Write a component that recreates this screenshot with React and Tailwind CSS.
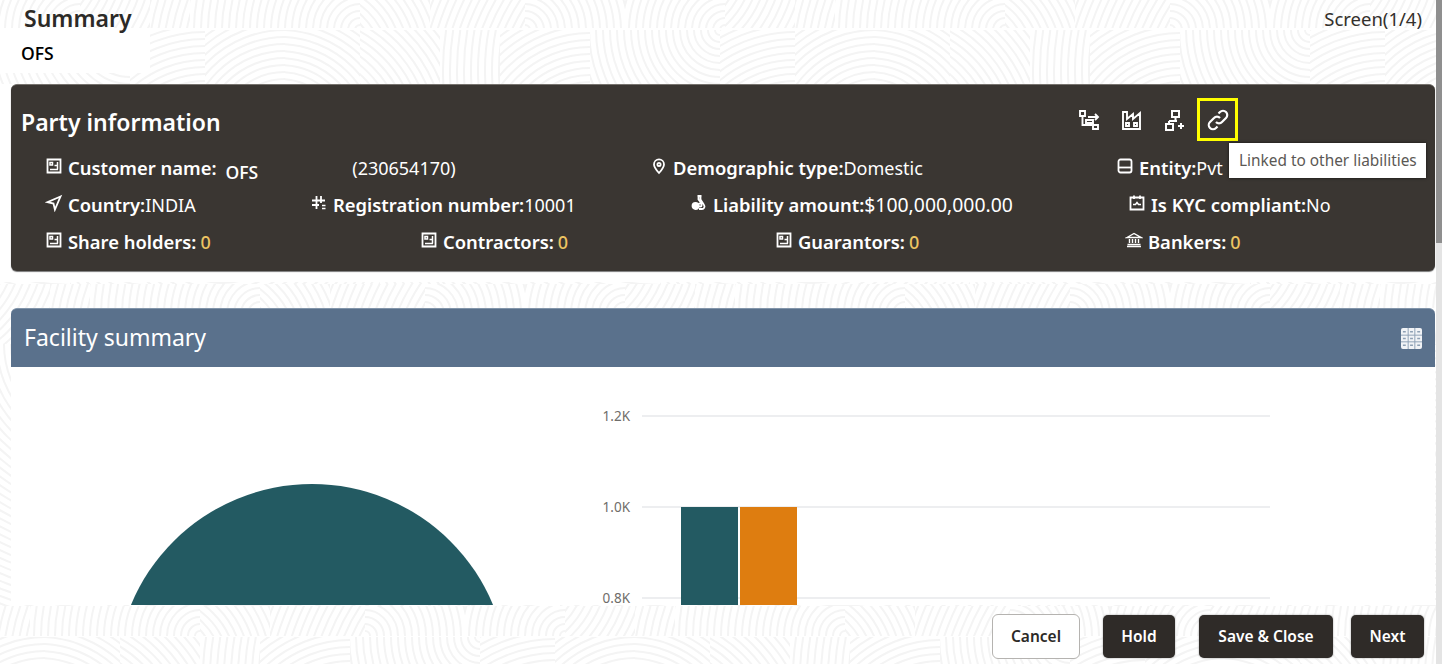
import React from "react";

const rings = (cx, cy) => {
  const out = [];
  for (let r = 5; r < 330; r += 7) out.push(<circle key={r} cx={cx} cy={cy} r={r} />);
  return out;
};

// each tile: width, centre x and y relative to the tile
const rowA = [[100,100,30],[70,-60,-40],[40,200,60],[170,170,30],[70,-40,60],[95,240,100],[100,0,30]];
const rowB = [[130,130,0],[75,75,140],[80,80,110],[75,-5,110],[80,-60,110],[60,260,40],[90,90,120]];
const Band = ({ y, h, tiles, shift = 0 }) => {
  const cells = [];
  let x = -shift, i = 0;
  while (x < 1442) {
    const [w, cx, cy] = tiles[i % tiles.length];
    cells.push(
      <svg key={i} x={x} y={y} width={w} height={h}>
        {rings(cx, cy)}
      </svg>
    );
    x += w;
    i++;
  }
  return <g>{cells}</g>;
};

const Pattern = () => (
  <svg className="absolute inset-0 w-[1442px] h-[664px]" viewBox="0 0 1442 664" fill="none" stroke="#f4f4f4" strokeWidth="2">
    <Band y={0} h={28} tiles={rowA} shift={20} />
    <Band y={30} h={54} tiles={rowB} />
    <Band y={84} h={200} tiles={rowB} shift={60} />
    <Band y={284} h={60} tiles={rowA} shift={120} />
    <Band y={344} h={262} tiles={rowB} shift={30} />
    <Band y={606} h={30} tiles={rowA} shift={180} />
    <Band y={637} h={27} tiles={rowB} shift={240} />
  </svg>
);

const Ic = ({ children, s = 18, className = "" }) => (
  <svg width={s} height={s} viewBox="0 0 18 18" fill="none" stroke="currentColor" strokeWidth="1.8" className={"shrink-0 " + className}>
    {children}
  </svg>
);

const CardIc = () => (
  <Ic>
    <path d="M2.500 2.500h13v13h-13z" />
    <path d="M5 5.500h2.500v2.500H5zM5 12.500h8M12.500 5v7.500M9.500 8.500h3" strokeWidth="1.500" />
  </Ic>
);
const NavIc = () => (
  <Ic>
    <path d="M15.500 2.500 2.500 8.200l6 1.400 1.400 6z" />
  </Ic>
);
const HashIc = () => (
  <Ic>
    <path d="M6.500 2v13M11 2v7M2 6.500h13M2 11h7" />
    <path d="M12 11.500h3.500M12 14.500h3.500" strokeWidth="1.500" />
  </Ic>
);
const PinIc = () => (
  <Ic>
    <path d="M9 16c-3-3.400-5-5.900-5-8.600a5 5 0 0 1 10 0c0 2.700-2 5.200-5 8.600z" />
    <circle cx="9" cy="7.400" r="1.600" />
  </Ic>
);
const BagIc = () => (
  <Ic>
    <path d="M7.500 2h4M8.500 2v3.500L12 10M10.500 2v3.500l3.500 5.500a2.500 2.500 0 0 1-2 4H9" />
    <circle cx="5.500" cy="12" r="3" fill="currentColor" />
    <circle cx="10" cy="11" r="1.600" />
  </Ic>
);
const EntityIc = () => (
  <Ic>
    <rect x="2.500" y="2.500" width="13" height="13" rx="2" />
    <path d="M2.500 10.500h13" />
  </Ic>
);
const KycIc = () => (
  <Ic>
    <path d="M2.500 3.500h13v12h-13zM6 1.500v3.500M12 1.500v3.500" />
    <path d="M5 10.500h2.500l1.500-2 1.500 2H13" strokeWidth="1.500" />
  </Ic>
);
const BankIc = () => (
  <Ic>
    <path d="M2 6.500 9 2.500l7 4zM2 15.500h14M2.500 13.500h13M4.500 8v4M7.500 8v4M10.500 8v4M13.500 8v4" strokeWidth="1.400" />
  </Ic>
);

const Field = ({ icon, label, value, zero, valueClass = "" }) => (
  <div className="flex items-center gap-[5px] whitespace-nowrap h-[24px]">
    <span className="-mt-[4px]">{icon}</span>
    <span className="font-semibold text-[18.4px]">{label}</span>
    {value && <span className={"font-normal -ml-[5px] " + valueClass}>{value}</span>}
    {zero && <span className="font-medium text-[#ecc462] -ml-[1px]">0</span>}
  </div>
);

const ToolIcon = ({ children }) => (
  <svg width="24" height="24" viewBox="0 0 24 24" fill="none" stroke="#fff" strokeWidth="2.200">
    {children}
  </svg>
);

const Btn = ({ children, w }) => (
  <button className={"h-[43px] rounded-[5px] bg-[#2f2b28] text-white text-[15.5px] font-semibold shadow-[0_0_2px_#0006] " + w}>
    {children}
  </button>
);

export default function App() {
  return (
    <div className="relative w-[1442px] h-[664px] overflow-hidden bg-white flex text-[#2c2a27] font-['Noto_Sans',sans-serif]">
      <Pattern />
      <main className="relative flex-1 min-w-0 flex flex-col">
        <header className="h-[84px] shrink-0">
          <div className="h-[30px] pt-[6px] pl-[24px] pr-[14px] flex justify-between">
            <h1 className="text-[23px] leading-[24px] font-semibold text-[#2c2a27]">Summary</h1>
            <span className="text-[18.5px] leading-[24px] text-[#33302c] mt-[1px]">Screen(1/4)</span>
          </div>
          <div className="w-[150px] h-[43px] bg-white pl-[21px] pt-[12px] text-[17.5px] leading-[22px] font-semibold text-black font-['Open_Sans',sans-serif]">OFS</div>
        </header>

        <div className="shrink-0 bg-white pb-[11px] pl-[10px] pr-[1px]">
          <section className="relative ml-[1px] h-[187px] rounded-[6px] bg-[#3a3632] text-white text-[18px] leading-[24px] border-t border-[#77736e] shadow-[0_1px_1px_#0008]">
            <div className="flex items-center h-[71px] pl-[10px] pt-[3px]">
              <h2 className="text-[23px] font-semibold">Party information</h2>
            </div>
            <div className="absolute left-[1186px] top-[13px] w-[41px] h-[43px] border-[3px] border-[#ffff00]" />
            <div className="absolute left-[1066px] top-[23px] flex gap-[19px]">
              <ToolIcon>
                <path d="M3 3h5v5H3zM5.500 8v9H15M11 9h9M9 12h7v3H9zM16 17h5v4h-5zM18 6l3 3-3 3" strokeWidth="1.900" />
              </ToolIcon>
              <ToolIcon>
                <path d="M3 21V4h4v7l6-5v5l7-6v16zM6 15h3v3H6zM14 15h3v3h-3z" strokeWidth="1.900" />
              </ToolIcon>
              <ToolIcon>
                <path d="M9 3h7v6H9zM12.500 9v4M6 13h8M6 13v3M3 16h7v6H3zM18 15v6M15 18h6" strokeWidth="2" />
              </ToolIcon>
              <ToolIcon>
                <path d="M10 14a4 4 0 0 0 6 0l4-4a4.200 4.200 0 0 0-6-6l-1.500 1.500M14 10a4 4 0 0 0-6 0l-4 4a4.200 4.200 0 0 0 6 6l1.500-1.500" />
              </ToolIcon>
            </div>
            <div className="absolute left-[1218px] top-[58px] w-[197px] h-[35px] bg-white text-[#5b5854] text-[15.4px] leading-[35px] pl-[10px] shadow-[0_0_3px_#000a] whitespace-nowrap">
              Linked to other liabilities
            </div>

            <div className="flex flex-col gap-[13px] pl-[34px]">
              <div className="grid grid-cols-[605px_466px_auto]">
                <div className="flex items-center whitespace-nowrap h-[24px]">
                  <Field icon={<CardIc />} label="Customer name:" />
                  <span className="ml-[9px] translate-y-[4px] text-[17.5px] font-semibold font-['Open_Sans',sans-serif]">OFS</span>
                  <span className="ml-[94px]">(230654170)</span>
                </div>
                <Field icon={<PinIc />} label="Demographic type:" value="Domestic" />
                <Field icon={<EntityIc />} label="Entity:" value="Pvt" />
              </div>
              <div className="grid grid-cols-[265px_380px_438px_auto]">
                <Field icon={<NavIc />} label="Country:" value="INDIA" />
                <Field icon={<HashIc />} label="Registration number:" value="10001" />
                <Field icon={<BagIc />} label="Liability amount:" value="$100,000,000.00" valueClass="text-[19.4px]" />
                <Field icon={<KycIc />} label="Is KYC compliant:" value="No" />
              </div>
              <div className="grid grid-cols-[375px_355px_350px_auto]">
                <Field icon={<CardIc />} label="Share holders:" zero />
                <Field icon={<CardIc />} label="Contractors:" zero />
                <Field icon={<CardIc />} label="Guarantors:" zero />
                <Field icon={<BankIc />} label="Bankers:" zero />
              </div>
            </div>
          </section>
        </div>

        <section className="mt-[26px] ml-[11px] mr-[1px] h-[297px] shrink-0 flex flex-col bg-white">
          <div className="h-[59px] shrink-0 rounded-t-[6px] bg-[#5a718c] border-t border-[#8295aa] flex items-center justify-between pl-[13px] pr-[13px]">
            <h2 className="text-[23px] text-white -mt-[2px]">Facility summary</h2>
            <svg width="21" height="21" viewBox="0 0 22 22">
              <rect x="0" y="0" width="22" height="22" rx="2" fill="#f1f3f6" />
              <path d="M0 7.500h22M0 14.500h22M7.500 0v22M14.500 0v22" stroke="#8ea0b4" strokeWidth="1" />
              <path d="M2 4h3M9.500 4h3M17 4h3M2 11h3M9.500 11h3M17 11h3M2 18h3M9.500 18h3M17 18h3" stroke="#8ea0b4" strokeWidth="1.500" />
            </svg>
          </div>
          <div className="flex-1 flex">
            <svg width="590" height="238" viewBox="0 0 590 238" className="shrink-0">
              <circle cx="301" cy="313" r="196" fill="#235a62" />
            </svg>
            <svg width="720" height="238" viewBox="0 0 720 238" className="shrink-0 overflow-visible">
              <g stroke="#e8e9ec" strokeWidth="1.600">
                <path d="M41 49h628M41 140h628M41 231h628" />
              </g>
              <g fill="#6f6d6a" fontSize="13.500" textAnchor="end" fontFamily="'Noto Sans',sans-serif">
                <text x="29" y="54">1.2K</text>
                <text x="29" y="145">1.0K</text>
                <text x="29" y="236">0.8K</text>
              </g>
              <rect x="80" y="140" width="57" height="98" fill="#235a62" />
              <rect x="139" y="140" width="57" height="98" fill="#de7d10" />
            </svg>
          </div>
        </section>

        <footer className="flex-1 flex items-center justify-end pr-[12px] pt-[4px]">
          <button className="w-[88px] h-[45px] rounded-[6px] bg-white border border-[#b5b3b0] text-[#2c2a27] text-[15.5px] font-semibold">Cancel</button>
          <span className="ml-[23px]"><Btn w="w-[72px]">Hold</Btn></span>
          <span className="ml-[24px]"><Btn w="w-[134px]">Save &amp; Close</Btn></span>
          <span className="ml-[18px]"><Btn w="w-[73px]">Next</Btn></span>
        </footer>
      </main>
      <div className="relative w-[6px] shrink-0 flex flex-col">
        <div className="h-[243px] bg-[#8f8f8f]" />
        <div className="flex-1 bg-[#e4e4e4]" />
      </div>
    </div>
  );
}
